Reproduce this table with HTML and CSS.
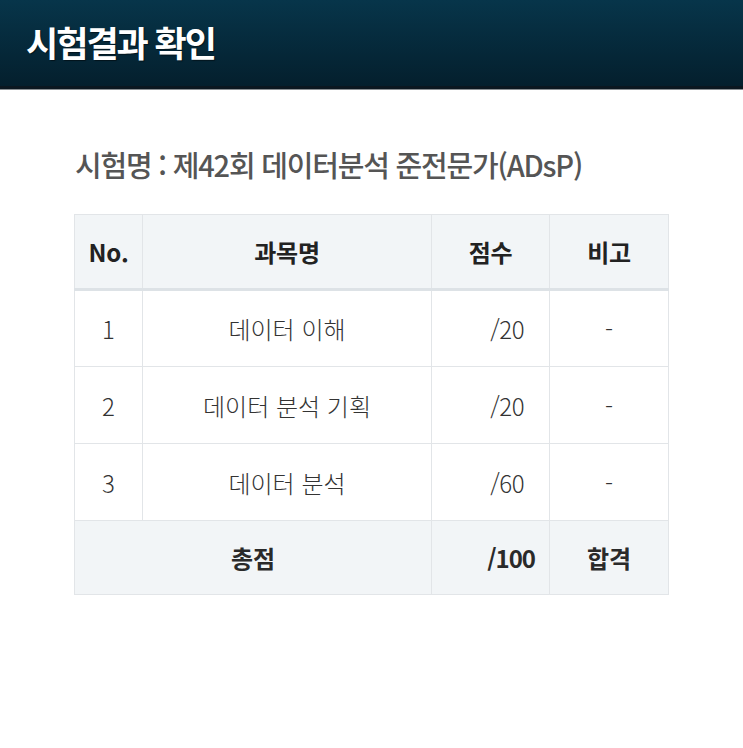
FILE: index.html
```html
<!DOCTYPE html>
<html lang="ko">
<head>
<meta charset="utf-8">
<link rel="stylesheet" href="styles.css">
</head>
<body>
<header class="topbar">
  <h1 class="topbar-title">시험결과 확인</h1>
</header>
<main class="content">
  <h2 class="exam-name">시험명 : 제42회 데이터분석 준전문가(ADsP)</h2>
  <table class="result">
    <colgroup>
      <col class="c-no"><col class="c-subj"><col class="c-score"><col class="c-note">
    </colgroup>
    <thead>
      <tr><th>No.</th><th>과목명</th><th>점수</th><th>비고</th></tr>
    </thead>
    <tbody>
      <tr><td>1</td><td>데이터 이해</td><td class="score">/20</td><td>-</td></tr>
      <tr><td>2</td><td>데이터 분석 기획</td><td class="score">/20</td><td>-</td></tr>
      <tr><td>3</td><td>데이터 분석</td><td class="score">/60</td><td>-</td></tr>
    </tbody>
    <tfoot>
      <tr><th colspan="2">총점</th><th class="score total">/100</th><th>합격</th></tr>
    </tfoot>
  </table>
</main>
</body>
</html>
```

FILE: styles.css
```css
* { box-sizing: border-box; }
html, body { margin: 0; padding: 0; background: #fff; }
body { font-family: "Noto Sans CJK KR", "Noto Sans", sans-serif; color: #333; }

.topbar {
  height: 89px;
  background: linear-gradient(#07354a, #041f2d);
  border-bottom: 3px solid #0b1720;
  box-shadow: 0 1px 0 #8a8f93;
  display: flex;
  align-items: center;
  padding: 0 0 4px 26px;
}
.topbar-title {
  margin: 0;
  color: #fff;
  font-size: 35px;
  font-weight: 700;
  letter-spacing: -2px;
  line-height: 1;
  text-shadow: 1px 1px 1px rgba(0,0,0,0.5);
}

.content { padding: 54px 75px 0 74px; }
.exam-name {
  margin: 0 0 29px 1px;
  font-size: 29px;
  line-height: 42px;
  font-weight: 500;
  color: #555;
  letter-spacing: -1.2px;
}

.result {
  width: 594px;
  border-collapse: collapse;
  table-layout: fixed;
  border: 1px solid #e2e5e8;
  font-size: 24px;
}
.c-no { width: 68px; }
.c-subj { width: 289px; }
.c-score { width: 118px; }
.c-note { width: 119px; }

.result th, .result td {
  border: 1px solid #e2e5e8;
  text-align: center;
  padding: 0;
}
.result thead th {
  height: 75px;
  background: #f2f5f7;
  border-bottom: 3px solid #dde2e6;
  font-weight: 700;
  color: #222;
  letter-spacing: -0.3px;
}
.result tbody td {
  height: 77px;
  font-weight: 300;
  color: #333;
}
.result tfoot th {
  height: 74px;
  background: #f2f5f7;
  font-weight: 700;
  color: #2a2a2a;
}
.result .score { text-align: right; padding-right: 25px; letter-spacing: -0.5px; }
.result .score.total { padding-right: 14px; letter-spacing: -1px; }
```
